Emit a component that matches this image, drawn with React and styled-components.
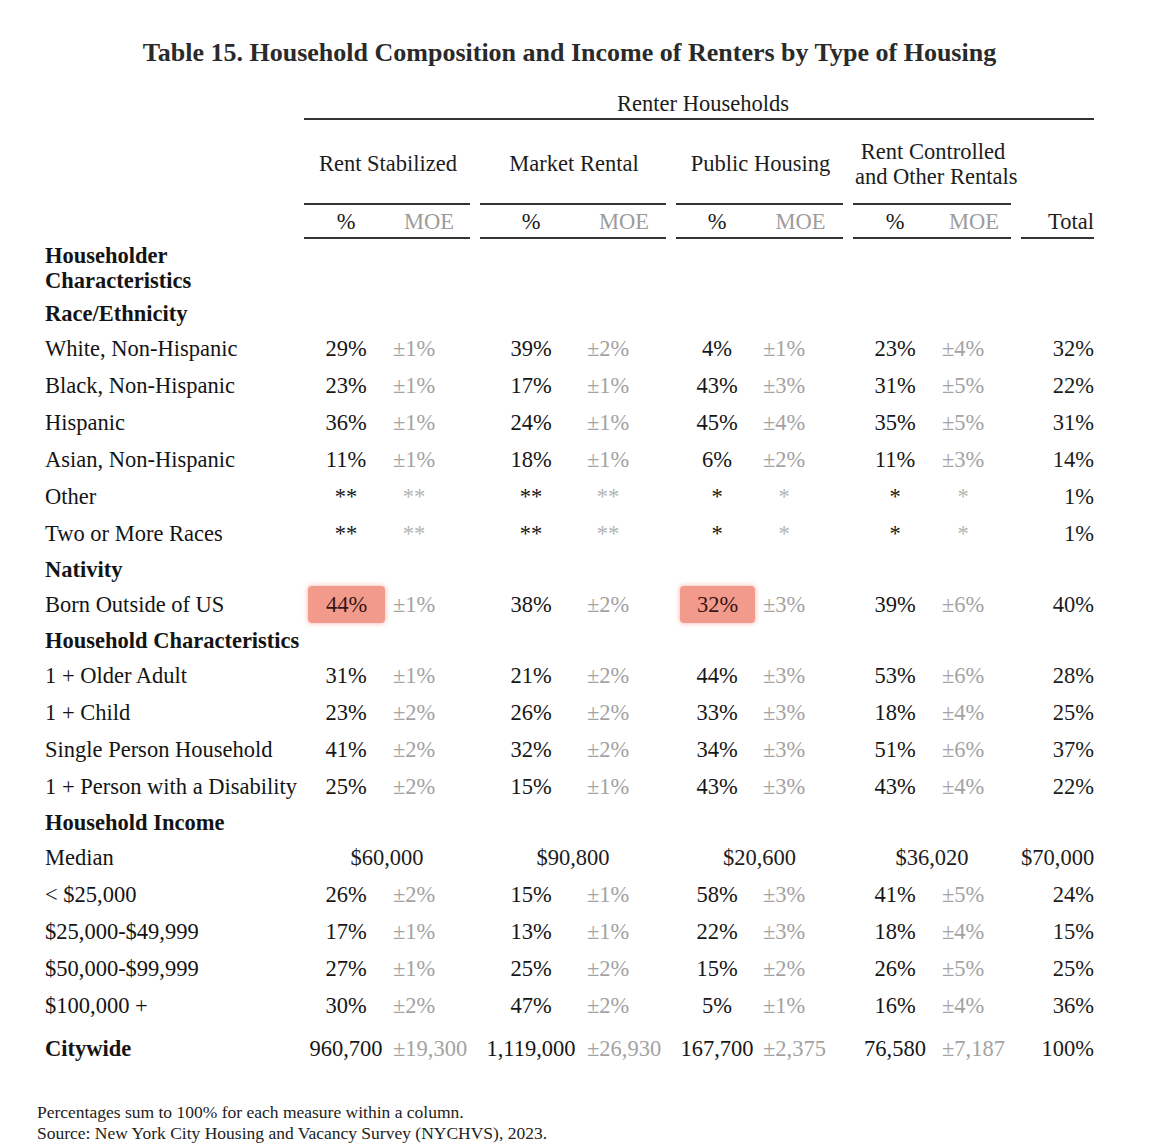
import styled, { createGlobalStyle } from 'styled-components';

const GlobalStyle = createGlobalStyle`
  body {
    margin: 0;
    background: #ffffff;
  }
`;

const GROUPS = [
  { name: ['Rent Stabilized'], pct: 84, moe: 82 },
  { name: ['Market Rental'], pct: 102, moe: 84 },
  { name: ['Public Housing'], pct: 82, moe: 85 },
  { name: ['Rent Controlled', 'and Other Rentals'], pct: 84, moe: 74 },
];

const TEMPLATE = `249px ${GROUPS.map((g) => `${g.pct + g.moe}px`).join(' ')} 73px`;

const ROWS = [
  { section: ['Householder', 'Characteristics'], h: 57 },
  { section: ['Race/Ethnicity'] },
  { label: 'White, Non-Hispanic', v: [['29%', '±1%'], ['39%', '±2%'], ['4%', '±1%'], ['23%', '±4%']], total: '32%' },
  { label: 'Black, Non-Hispanic', v: [['23%', '±1%'], ['17%', '±1%'], ['43%', '±3%'], ['31%', '±5%']], total: '22%' },
  { label: 'Hispanic', v: [['36%', '±1%'], ['24%', '±1%'], ['45%', '±4%'], ['35%', '±5%']], total: '31%' },
  { label: 'Asian, Non-Hispanic', v: [['11%', '±1%'], ['18%', '±1%'], ['6%', '±2%'], ['11%', '±3%']], total: '14%' },
  { label: 'Other', v: [['**', '**'], ['**', '**'], ['*', '*'], ['*', '*']], total: '1%' },
  { label: 'Two or More Races', v: [['**', '**'], ['**', '**'], ['*', '*'], ['*', '*']], total: '1%' },
  { section: ['Nativity'] },
  { label: 'Born Outside of US', v: [['44%', '±1%', true], ['38%', '±2%'], ['32%', '±3%', true], ['39%', '±6%']], total: '40%' },
  { section: ['Household Characteristics'] },
  { label: '1 + Older Adult', v: [['31%', '±1%'], ['21%', '±2%'], ['44%', '±3%'], ['53%', '±6%']], total: '28%' },
  { label: '1 + Child', v: [['23%', '±2%'], ['26%', '±2%'], ['33%', '±3%'], ['18%', '±4%']], total: '25%' },
  { label: 'Single Person Household', v: [['41%', '±2%'], ['32%', '±2%'], ['34%', '±3%'], ['51%', '±6%']], total: '37%' },
  { label: '1 + Person with a Disability', v: [['25%', '±2%'], ['15%', '±1%'], ['43%', '±3%'], ['43%', '±4%']], total: '22%' },
  { section: ['Household Income'] },
  { label: 'Median', median: ['$60,000', '$90,800', '$20,600', '$36,020'], total: '$70,000' },
  { label: '< $25,000', v: [['26%', '±2%'], ['15%', '±1%'], ['58%', '±3%'], ['41%', '±5%']], total: '24%' },
  { label: '$25,000-$49,999', v: [['17%', '±1%'], ['13%', '±1%'], ['22%', '±3%'], ['18%', '±4%']], total: '15%' },
  { label: '$50,000-$99,999', v: [['27%', '±1%'], ['25%', '±2%'], ['15%', '±2%'], ['26%', '±5%']], total: '25%' },
  { label: '$100,000 +', v: [['30%', '±2%'], ['47%', '±2%'], ['5%', '±1%'], ['16%', '±4%']], total: '36%' },
  {
    label: 'Citywide',
    bold: true,
    h: 48,
    v: [['960,700', '±19,300'], ['1,119,000', '±26,930'], ['167,700', '±2,375'], ['76,580', '±7,187']],
    total: '100%',
  },
];

const Page = styled.div`
  width: 1049px;
  padding: 38px 0 0 45px;
  font-family: 'Liberation Serif', 'Times New Roman', serif;
  color: #1c1c1c;
`;

const Title = styled.h1`
  margin: 0;
  text-align: center;
  font-size: 26px;
  line-height: 30px;
  font-weight: 700;
  color: #2a2a2a;
`;

const SuperHeader = styled.div`
  margin: 22px 0 0 259px;
  padding-left: 8px;
  text-align: center;
  font-size: 22.5px;
  line-height: 28px;
  border-bottom: 2px solid #333;
`;

const Row = styled.div`
  display: grid;
  grid-template-columns: ${TEMPLATE};
  column-gap: 10px;
  height: ${(p) => p.$h || 37}px;
  align-items: ${(p) => p.$align || 'center'};
  font-size: 22.5px;
  line-height: 25px;
`;

const GroupName = styled.div`
  padding: 4px 0 0 2px;
  text-align: center;
  white-space: nowrap;
`;

const SubHead = styled.div`
  display: grid;
  grid-template-columns: ${(p) => p.$pct}px ${(p) => p.$moe}px;
  align-items: center;
  border-top: 2px solid #333;
  border-bottom: 2px solid #333;
`;

const HeadCell = styled.div`
  text-align: center;
  color: ${(p) => (p.$muted ? '#9c9c9c' : '#1c1c1c')};
`;

const TotalHead = styled.div`
  display: flex;
  align-items: center;
  justify-content: flex-end;
  margin-top: 2px;
  border-bottom: 2px solid #333;
`;

const Label = styled.div`
  white-space: nowrap;
  font-weight: ${(p) => (p.$bold ? 700 : 400)};
  color: #141414;
`;

const Group = styled.div`
  display: grid;
  grid-template-columns: ${(p) => p.$pct}px ${(p) => p.$moe}px;
  align-self: stretch;
  align-items: center;
`;

const Pct = styled.div`
  display: flex;
  align-items: center;
  justify-content: center;
  align-self: stretch;
  margin: ${(p) => (p.$hl ? '0 3px 0 4px' : '0')};
  border-radius: 4px;
  white-space: nowrap;
  background: ${(p) => (p.$hl ? '#f29b8d' : 'transparent')};
  box-shadow: ${(p) => (p.$hl ? '0 0 4px 1px rgba(242, 155, 141, 0.55)' : 'none')};
  color: ${(p) => (p.$hl ? '#3a1612' : '#161616')};
`;

const Moe = styled.div`
  padding-left: 5px;
  white-space: nowrap;
  color: #a3a3a3;
`;

const StarMoe = styled.span`
  display: inline-block;
  width: 42px;
  text-align: center;
  color: #b3b3b3;
`;

const Median = styled.div`
  text-align: center;
  white-space: nowrap;
`;

const Total = styled.div`
  text-align: right;
  white-space: nowrap;
  overflow: hidden;
`;

const Notes = styled.div`
  margin: 30px 0 0 -8px;
  font-size: 17.5px;
  line-height: 21px;
  color: #222;
`;

function DataRow({ row }) {
  if (row.section) {
    return (
      <Row $h={row.h || 34}>
        <Label $bold>
          {row.section.map((line, i) => (
            <div key={i}>{line}</div>
          ))}
        </Label>
      </Row>
    );
  }
  return (
    <Row $h={row.h}>
      <Label $bold={row.bold}>{row.label}</Label>
      {GROUPS.map((g, i) =>
        row.median ? (
          <Median key={i}>{row.median[i]}</Median>
        ) : (
          <Group key={i} $pct={g.pct} $moe={g.moe}>
            <Pct $hl={row.v[i][2]}>{row.v[i][0]}</Pct>
            <Moe>{row.v[i][1].startsWith('*') ? <StarMoe>{row.v[i][1]}</StarMoe> : row.v[i][1]}</Moe>
          </Group>
        )
      )}
      <Total>{row.total}</Total>
    </Row>
  );
}

export default function App() {
  return (
    <Page>
      <GlobalStyle />
      <Title>Table 15. Household Composition and Income of Renters by Type of Housing</Title>
      <SuperHeader>Renter Households</SuperHeader>
      <Row $h={83}>
        <div />
        {GROUPS.map((g, i) => (
          <GroupName key={i}>
            {g.name.map((line, j) => (
              <div key={j}>{line}</div>
            ))}
          </GroupName>
        ))}
        <div />
      </Row>
      <Row $h={36} $align="stretch">
        <div />
        {GROUPS.map((g, i) => (
          <SubHead key={i} $pct={g.pct} $moe={g.moe}>
            <HeadCell>%</HeadCell>
            <HeadCell $muted>MOE</HeadCell>
          </SubHead>
        ))}
        <TotalHead>Total</TotalHead>
      </Row>
      {ROWS.map((row, i) => (
        <DataRow key={i} row={row} />
      ))}
      <Notes>
        <div>Percentages sum to 100% for each measure within a column.</div>
        <div>Source: New York City Housing and Vacancy Survey (NYCHVS), 2023.</div>
      </Notes>
    </Page>
  );
}
